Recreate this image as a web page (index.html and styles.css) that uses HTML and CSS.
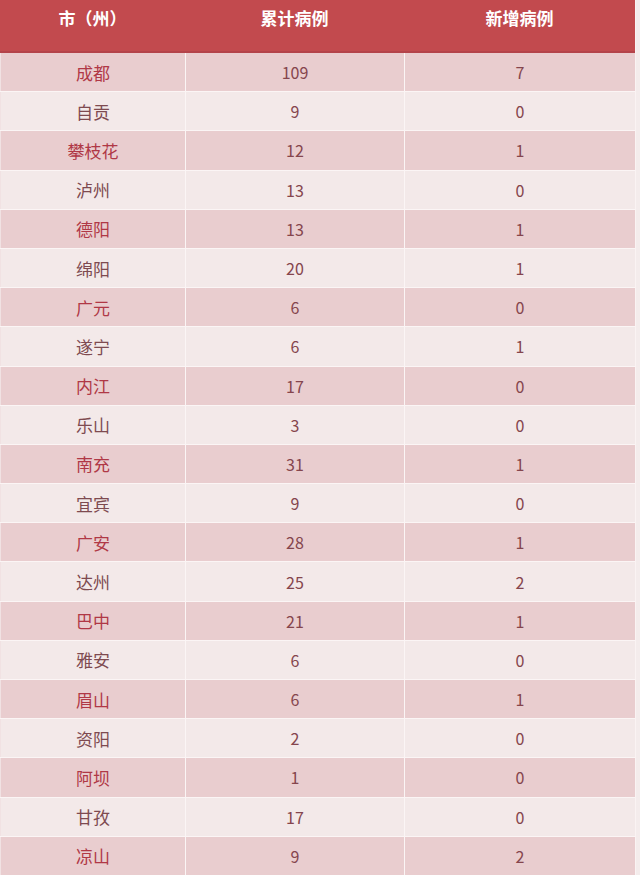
FILE: index.html
```html
<!DOCTYPE html>
<html lang="zh">
<head>
<meta charset="utf-8">
<link rel="stylesheet" href="styles.css">
</head>
<body>
<div class="table">
  <div class="head">
    <div class="hc">市（州）</div>
    <div class="hc">累计病例</div>
    <div class="hc">新增病例</div>
  </div>
  <div class="row pink"><div class="c name">成都</div><div class="c">109</div><div class="c">7</div></div>
  <div class="row light"><div class="c name">自贡</div><div class="c">9</div><div class="c">0</div></div>
  <div class="row pink"><div class="c name">攀枝花</div><div class="c">12</div><div class="c">1</div></div>
  <div class="row light"><div class="c name">泸州</div><div class="c">13</div><div class="c">0</div></div>
  <div class="row pink"><div class="c name">德阳</div><div class="c">13</div><div class="c">1</div></div>
  <div class="row light"><div class="c name">绵阳</div><div class="c">20</div><div class="c">1</div></div>
  <div class="row pink"><div class="c name">广元</div><div class="c">6</div><div class="c">0</div></div>
  <div class="row light"><div class="c name">遂宁</div><div class="c">6</div><div class="c">1</div></div>
  <div class="row pink"><div class="c name">内江</div><div class="c">17</div><div class="c">0</div></div>
  <div class="row light"><div class="c name">乐山</div><div class="c">3</div><div class="c">0</div></div>
  <div class="row pink"><div class="c name">南充</div><div class="c">31</div><div class="c">1</div></div>
  <div class="row light"><div class="c name">宜宾</div><div class="c">9</div><div class="c">0</div></div>
  <div class="row pink"><div class="c name">广安</div><div class="c">28</div><div class="c">1</div></div>
  <div class="row light"><div class="c name">达州</div><div class="c">25</div><div class="c">2</div></div>
  <div class="row pink"><div class="c name">巴中</div><div class="c">21</div><div class="c">1</div></div>
  <div class="row light"><div class="c name">雅安</div><div class="c">6</div><div class="c">0</div></div>
  <div class="row pink"><div class="c name">眉山</div><div class="c">6</div><div class="c">1</div></div>
  <div class="row light"><div class="c name">资阳</div><div class="c">2</div><div class="c">0</div></div>
  <div class="row pink"><div class="c name">阿坝</div><div class="c">1</div><div class="c">0</div></div>
  <div class="row light"><div class="c name">甘孜</div><div class="c">17</div><div class="c">0</div></div>
  <div class="row pink"><div class="c name">凉山</div><div class="c">9</div><div class="c">2</div></div>
</div>
</body>
</html>
```

FILE: styles.css
```css
html, body {
  margin: 0;
  padding: 0;
  background: #f4ecec;
  height: 875px;
  overflow: hidden;
}
.table {
  width: 635px;
  font-family: "Noto Sans CJK SC", "Noto Sans", sans-serif;
  border-right: 1px solid #faf3f3;
}
.head {
  display: grid;
  grid-template-columns: 185px 219px 1fr;
  height: 53px;
  box-sizing: border-box;
  background: #c24a4e;
  border-bottom: 2px solid #b4434a;
}
.hc {
  color: #fff;
  font-weight: bold;
  font-size: 17px;
  text-align: center;
  padding-top: 6px;
  line-height: 24px;
}
.row {
  display: grid;
  grid-template-columns: 185px 219px 1fr;
  height: 39.2px;
  box-sizing: border-box;
  border-bottom: 1px solid #fbf5f5;
}
.pink { background: #e9cdcf; }
.light { background: #f3e9e9; }
.c {
  display: flex;
  align-items: center;
  justify-content: center;
  font-size: 16px;
  color: #85454d;
  border-left: 1px solid #fbf5f5;
}
.c:first-child { border-left: 1px solid #f1e2e3; }
.name { font-size: 17px; }
.pink .name { color: #b03846; }
.light .name { color: #7e4a50; }
```
